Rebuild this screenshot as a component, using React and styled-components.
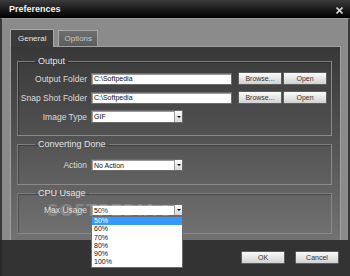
import React from 'react'
import styled, { createGlobalStyle } from 'styled-components'

const GlobalStyle = createGlobalStyle`
    html, body {
        margin: 0;
        padding: 0;
        background: #2e2e2e;
    }
    body {
        font-family: "Liberation Sans", "DejaVu Sans", Arial, sans-serif;
    }
`

const Window = styled.div`
    width: 350px;
    height: 276px;
    display: flex;
    flex-direction: column;
    background: #333333;
    overflow: hidden;
    position: relative;
`

const TitleBar = styled.div`
    height: 18px;
    flex: none;
    display: flex;
    align-items: center;
    justify-content: space-between;
    padding: 0 7px 0 9px;
    background: linear-gradient(#3c3c3c, #151515 60%, #000);
    color: #f2f2f2;
    font-size: 9px;
    font-weight: 700;
    box-sizing: border-box;
`

const CloseIcon = styled.svg`
    width: 7px;
    height: 7px;
    margin-top: 2px;
`

const Frame = styled.div`
    height: 222px;
    flex: none;
    display: flex;
    flex-direction: column;
    background: #8b8b8b;
    border-left: 2px solid #3a3a3a;
    border-right: 2px solid #3a3a3a;
    border-top: 1px solid #9a9a9a;
    padding: 9px 7px 0 8px;
    box-sizing: border-box;
`

const TabRow = styled.div`
    display: flex;
    align-items: flex-end;
    gap: 4px;
    height: 18px;
    flex: none;
`

const Tab = styled.div`
    height: ${p => (p.$active ? '18px' : '16px')};
    padding: 0 ${p => (p.$active ? '7px' : '5px')};
    display: flex;
    align-items: center;
    box-sizing: border-box;
    font-size: 8px;
    color: ${p => (p.$active ? '#e6e6e6' : '#c8c8c8')};
    background: ${p => (p.$active ? '#3b3b3b' : 'linear-gradient(#6e6e6e, #5c5c5c)')};
    border: 1px solid #a8a8a8;
    border-bottom: none;
    margin-bottom: ${p => (p.$active ? '-1px' : '0')};
    position: relative;
    z-index: 1;
`

const Panel = styled.div`
    flex: 1;
    background: linear-gradient(#383838, #515151 45%, #727272);
    border: 1px solid #a0a0a0;
    border-bottom: none;
    padding: 9px 8px 0 6px;
    display: flex;
    flex-direction: column;
    gap: 3px;
`

const Group = styled.fieldset`
    margin: 0;
    padding: ${p => p.$pad || '6px 0 12px 0'};
    border: 1px solid #8a8a8a;
    border-color: #7e7e7e #8a8a8a #8a8a8a #7e7e7e;
    box-shadow: inset 1px 1px 0 rgba(0, 0, 0, 0.25);
    display: flex;
    flex-direction: column;
    gap: 6px;
    min-width: 0;
`

const Legend = styled.legend`
    margin-left: 17px;
    padding: 0 3px;
    font-size: 9px;
    line-height: 10px;
    color: #e4e4e4;
`

const Row = styled.div`
    display: grid;
    grid-template-columns: 69px 141px 44px 44px;
    column-gap: 4px;
    align-items: center;
    & > :nth-child(3) {
        margin-left: 2px;
    }
    & > :nth-child(4) {
        margin-left: -1px;
    }
`

const Label = styled.div`
    text-align: right;
    font-size: 8.5px;
    color: #dcdcdc;
    white-space: nowrap;
`

const Input = styled.div`
    height: 12px;
    box-sizing: border-box;
    background: #fff;
    border: 1px solid #6c6c6c;
    box-shadow: inset 1px 1px 0 #9a9a9a;
    font-size: 7px;
    line-height: 10px;
    padding-left: 2px;
    color: #111;
`

const SelectBox = styled.div`
    width: 92px;
    height: ${p => p.$h || 13}px;
    box-sizing: border-box;
    background: #fff;
    border: 1px solid #6c6c6c;
    box-shadow: inset 1px 1px 0 #9a9a9a;
    display: flex;
    align-items: center;
    justify-content: space-between;
    font-size: 7px;
    color: #111;
    padding-left: 2px;
    position: relative;
`

const Arrow = styled.div`
    width: 8px;
    height: 100%;
    box-sizing: border-box;
    border-left: 1px solid #9a9a9a;
    background: linear-gradient(#fafafa, #d8d8d8);
    display: flex;
    align-items: center;
    justify-content: center;
    &::after {
        content: '';
        border-left: 2px solid transparent;
        border-right: 2px solid transparent;
        border-top: 2px solid #000;
    }
`

const Button = styled.div`
    height: 13px;
    box-sizing: border-box;
    width: ${p => p.$w || 44}px;
    background: linear-gradient(#fbfbfb, #e6e6e6 50%, #d2d2d2);
    border: 1px solid #5e5e5e;
    border-radius: 1px;
    display: flex;
    align-items: center;
    justify-content: center;
    font-size: 7px;
    color: #333;
`

const DropList = styled.div`
    position: absolute;
    left: -1px;
    top: 11px;
    width: 92px;
    background: #fff;
    border: 1px solid #6c6c6c;
    box-sizing: border-box;
    z-index: 5;
`

const DropItem = styled.div`
    height: 8.3px;
    line-height: 8.3px;
    font-size: 7px;
    padding-left: 2px;
    color: ${p => (p.$sel ? '#fff' : '#111')};
    background: ${p => (p.$sel ? '#3399ff' : 'transparent')};
`

const Watermark = styled.div`
    position: absolute;
    left: 47px;
    top: 201px;
    font-size: 16px;
    font-weight: 700;
    letter-spacing: 1px;
    color: rgba(255, 255, 255, 0.2);
    z-index: 6;
    pointer-events: none;
    font-family: "DejaVu Sans", sans-serif;
`

const Footer = styled.div`
    flex: 1;
    display: flex;
    justify-content: flex-end;
    align-items: flex-start;
    gap: 10px;
    padding: 11px 11px 0 0;
    background: #333333;
    border-left: 2px solid #2a2a2a;
`

const Dialog = () => {
    const usages = ['50%', '60%', '70%', '80%', '90%', '100%']
    return (
        <Window>
            <TitleBar>
                <span>Preferences</span>
                <CloseIcon viewBox="0 0 7 7">
                    <path d="M0.5 0.5 L6.5 6.5 M6.5 0.5 L0.5 6.5" stroke="#d6d6d6" strokeWidth="1.6" />
                </CloseIcon>
            </TitleBar>
            <Frame>
                <TabRow>
                    <Tab $active>General</Tab>
                    <Tab>Options</Tab>
                </TabRow>
                <Panel>
                    <Group>
                        <Legend>Output</Legend>
                        <Row>
                            <Label>Output Folder</Label>
                            <Input>C:\Softpedia</Input>
                            <Button>Browse...</Button>
                            <Button>Open</Button>
                        </Row>
                        <Row>
                            <Label>Snap Shot Folder</Label>
                            <Input>C:\Softpedia</Input>
                            <Button>Browse...</Button>
                            <Button>Open</Button>
                        </Row>
                        <Row>
                            <Label>Image Type</Label>
                            <SelectBox>GIF<Arrow /></SelectBox>
                        </Row>
                    </Group>
                    <Group $pad="10px 0 13px 0">
                        <Legend>Converting Done</Legend>
                        <Row>
                            <Label>Action</Label>
                            <SelectBox $h={12}>No Action<Arrow /></SelectBox>
                        </Row>
                    </Group>
                    <Group $pad="6px 0 17px 0">
                        <Legend>CPU Usage</Legend>
                        <Row>
                            <Label>Max Usage</Label>
                            <SelectBox $h={12}>
                                50%<Arrow />
                                <DropList>
                                    {usages.map((u, i) => (
                                        <DropItem key={u} $sel={i === 0}>{u}</DropItem>
                                    ))}
                                </DropList>
                            </SelectBox>
                        </Row>
                    </Group>
                </Panel>
            </Frame>
            <Footer>
                <Button $w={44}>OK</Button>
                <Button $w={44}>Cancel</Button>
            </Footer>
            <Watermark>SOFTPEDIA®</Watermark>
        </Window>
    )
}

export default function App() {
    return (
        <>
            <GlobalStyle />
            <Dialog />
        </>
    )
}
